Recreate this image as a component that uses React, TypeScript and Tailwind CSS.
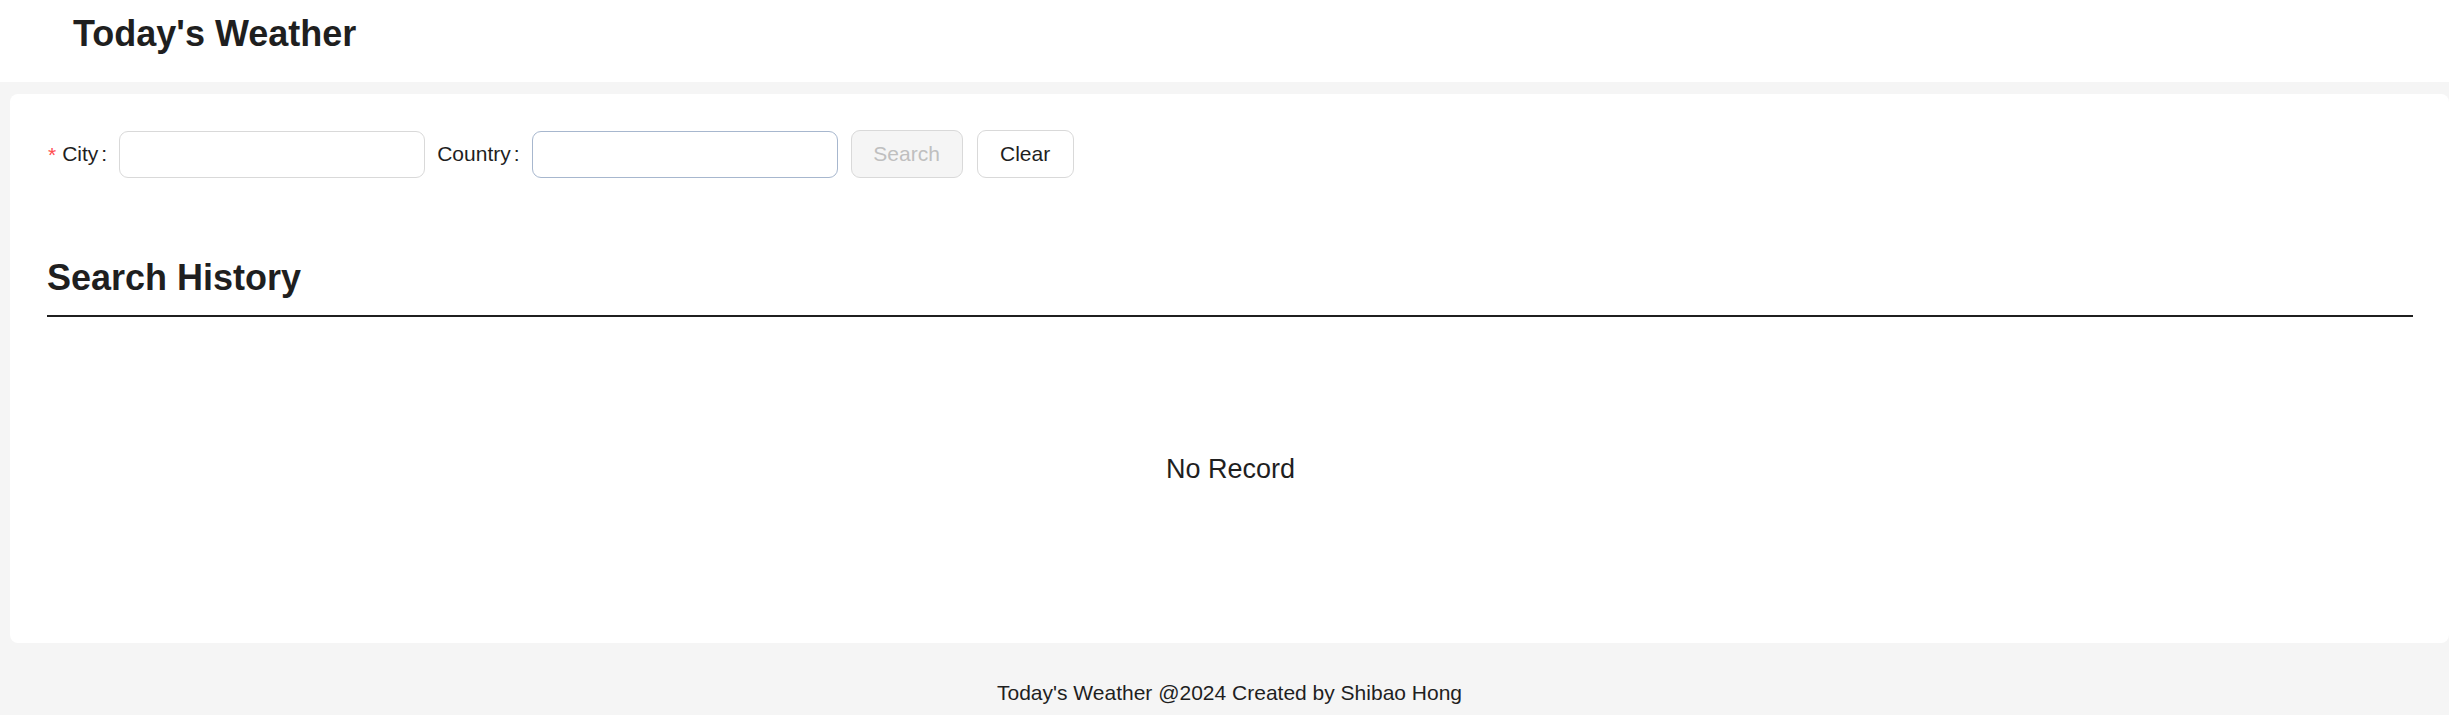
import { useState } from 'react'

const font = { fontFamily: '"Liberation Sans", Arial, sans-serif' }

function Label({ text, required }: { text: string; required?: boolean }) {
  return (
    <label className="flex items-center h-[48px] text-[21px] text-[#1f1f1f] whitespace-nowrap">
      {required && <span className="text-[#ff4d4f] mr-[6px] leading-none">*</span>}
      <span>{text}</span>
      <span className="ml-[3px] mr-[12px]">:</span>
    </label>
  )
}

export default function App() {
  const [city, setCity] = useState('')
  const [country, setCountry] = useState('')

  return (
    <div className="min-h-screen bg-[#f5f5f5] overflow-hidden" style={font}>
      <header className="bg-white h-[82px] pl-[73px] pt-[14px]">
        <h1 className="text-[36px] leading-[40px] font-bold text-[#1f1f1f]">Today's Weather</h1>
      </header>

      <main className="pl-[10px] pt-[12px]">
        <section className="bg-white rounded-lg h-[549px] pt-[36px] pl-[38px] pr-[36px]">
          <form className="flex items-center" onSubmit={(e) => e.preventDefault()}>
            <Label text="City" required />
            <input
              value={city}
              onChange={(e) => setCity(e.target.value)}
              className="w-[306px] h-[47px] rounded-[9px] border border-[#d9d9d9] bg-white px-[16px] text-[21px] outline-none"
            />
            <div className="w-[12px]" />
            <Label text="Country" />
            <input
              value={country}
              onChange={(e) => setCountry(e.target.value)}
              className="w-[306px] h-[47px] rounded-[9px] border border-[#a7b7ce] bg-white px-[16px] text-[21px] outline-none"
            />
            <button
              type="submit"
              disabled
              className="ml-[13px] w-[112px] h-[48px] rounded-[9px] border border-[#d9d9d9] bg-[#f5f5f5] text-[21px] text-[#bfbfbf]"
            >
              Search
            </button>
            <button
              type="button"
              onClick={() => {
                setCity('')
                setCountry('')
              }}
              className="ml-[14px] w-[97px] h-[48px] rounded-[9px] border border-[#d9d9d9] bg-white text-[21px] text-[#1f1f1f]"
            >
              Clear
            </button>
          </form>

          <h2 className="mt-[76px] -ml-px text-[36px] leading-[48px] font-bold text-[#1f1f1f]">Search History</h2>
          <div className="mt-[13px] -ml-px h-[2px] bg-[#1f1f1f]" />

          <p className="mt-[137px] text-center text-[27px] leading-[31px] text-[#1f1f1f]">No Record</p>
        </section>

        <footer className="pt-[33px] pb-[24px] text-center text-[21px] leading-[33px] text-[#1f1f1f]">
          Today's Weather @2024 Created by Shibao Hong
        </footer>
      </main>
    </div>
  )
}
